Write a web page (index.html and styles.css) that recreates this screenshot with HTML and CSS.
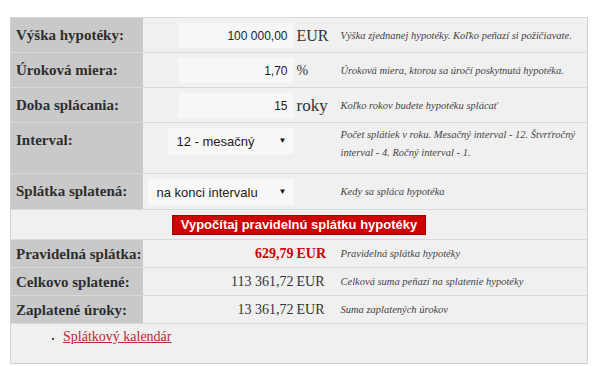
FILE: index.html
```html
<!DOCTYPE html>
<html lang="sk">
<head>
    <meta charset="UTF-8">
    <meta name="viewport" content="width=device-width, initial-scale=1.0">
    <title>Hypotekárna kalkulačka</title>
    <link rel="stylesheet" href="styles.css">
</head>
<body>
    <div class="calc">
        <table class="calc-table">
            <colgroup>
                <col class="col-label">
                <col class="col-field">
                <col class="col-unit">
                <col class="col-desc">
            </colgroup>
            <tr class="row-input">
                <th>Výška hypotéky:</th>
                <td class="field"><input type="text" class="num" value="100 000,00" style="width:116px"></td>
                <td class="unit">EUR</td>
                <td class="desc">Výška zjednanej hypotéky. Koľko peňazí si požičiavate.</td>
            </tr>
            <tr class="row-input">
                <th>Úroková miera:</th>
                <td class="field"><input type="text" class="num" value="1,70" style="width:116px"></td>
                <td class="unit unit-small">%</td>
                <td class="desc">Úroková miera, ktorou sa úročí poskytnutá hypotéka.</td>
            </tr>
            <tr class="row-input">
                <th>Doba splácania:</th>
                <td class="field"><input type="text" class="num" value="15" style="width:116px"></td>
                <td class="unit unit-big">roky</td>
                <td class="desc">Koľko rokov budete hypotéku splácať</td>
            </tr>
            <tr class="row-input row-tall">
                <th>Interval:</th>
                <td class="field">
                    <span class="select-wrap">
                        <select style="width:126px">
                            <option>12 - mesačný</option>
                            <option>4 - štvrťročný</option>
                            <option>1 - ročný</option>
                        </select>
                    </span>
                </td>
                <td class="unit"></td>
                <td class="desc">Počet splátiek v roku. Mesačný interval - 12. Štvrťročný interval - 4. Ročný interval - 1.</td>
            </tr>
            <tr class="row-input">
                <th>Splátka splatená:</th>
                <td class="field">
                    <span class="select-wrap">
                        <select style="width:146px">
                            <option>na konci intervalu</option>
                            <option>na začiatku intervalu</option>
                        </select>
                    </span>
                </td>
                <td class="unit"></td>
                <td class="desc">Kedy sa spláca hypotéka</td>
            </tr>
            <tr class="row-button">
                <td colspan="4"><button type="button">Vypočítaj pravidelnú splátku hypotéky</button></td>
            </tr>
            <tr class="row-result row-main">
                <th>Pravidelná splátka:</th>
                <td class="value">629,79</td>
                <td class="unit">EUR</td>
                <td class="desc">Pravidelná splátka hypotéky</td>
            </tr>
            <tr class="row-result">
                <th>Celkovo splatené:</th>
                <td class="value">113 361,72</td>
                <td class="unit">EUR</td>
                <td class="desc">Celková suma peňazí na splatenie hypotéky</td>
            </tr>
            <tr class="row-result">
                <th>Zaplatené úroky:</th>
                <td class="value">13 361,72</td>
                <td class="unit">EUR</td>
                <td class="desc">Suma zaplatených úrokov</td>
            </tr>
            <tr class="row-links">
                <td colspan="4">
                    <ul>
                        <li><a href="#kalendar">Splátkový kalendár</a></li>
                    </ul>
                </td>
            </tr>
        </table>
    </div>
</body>
</html>
```

FILE: styles.css
```css
* {
    margin: 0;
    padding: 0;
    box-sizing: border-box;
}

body {
    background: #fff;
    font-family: "Liberation Serif", serif;
    color: #333;
}

.calc {
    padding: 17px 10px;
}

.calc-table {
    width: 578px;
    table-layout: fixed;
    border-collapse: collapse;
    border: 1px solid #d2d2d2;
    background: #f0f0f0;
}

.col-label { width: 132px; }
.col-field { width: 152px; }
.col-unit { width: 44px; }

.calc-table th,
.calc-table td {
    border-top: 1px solid #d9d9d9;
    vertical-align: top;
}

.calc-table th {
    background: #c9c9c9;
    text-align: left;
    font-size: 15px;
    font-weight: bold;
    line-height: 18px;
    padding: 8px 2px 8px 5px;
    color: #2e2e2e;
    white-space: nowrap;
    overflow: hidden;
}

/* input rows */
.row-input td {
    padding: 5px 0 4px;
}

.row-input .field {
    text-align: right;
    padding-right: 1px;
}

input.num {
    height: 25px;
    border: none;
    background: #f7f7f7;
    font-family: "Liberation Sans", Arial, sans-serif;
    font-size: 12px;
    color: #222;
    text-align: right;
    padding: 0 6px;
}

.select-wrap {
    position: relative;
    display: inline-block;
}

.select-wrap select {
    appearance: none;
    -webkit-appearance: none;
    height: 26px;
    border: none;
    border-radius: 0;
    background: #f8f8f8;
    font-family: "Liberation Sans", Arial, sans-serif;
    font-size: 13px;
    color: #222;
    padding: 0 16px 0 9px;
    display: block;
}

.select-wrap::after {
    content: "\25BC";
    position: absolute;
    right: 7px;
    top: 8px;
    font-size: 8px;
    color: #111;
    pointer-events: none;
}

.unit {
    font-size: 16px;
    line-height: 25px;
    padding-left: 2px !important;
    white-space: nowrap;
    color: #333;
}

.unit-small {
    font-size: 14px;
}

.unit-big {
    font-size: 17px;
}

.desc {
    font-style: italic;
    font-size: 10.5px;
    line-height: 25px;
    color: #444;
    padding: 5px 2px 4px 2px !important;
}

.row-tall th {
    height: 51px;
}

.row-tall .desc {
    line-height: 18px;
    padding-top: 3px !important;
}

/* button row */
.row-button td {
    text-align: center;
    padding: 5px 0 4px;
}

button {
    background: #cc0000;
    color: #fff;
    border: 1px solid #a30000;
    font-family: "Liberation Sans", Arial, sans-serif;
    font-size: 13px;
    font-weight: bold;
    line-height: 18px;
    height: 20px;
    padding: 0 8px;
    cursor: pointer;
}

/* result rows */
.row-result th {
    padding: 5px 2px 4px 5px;
}

.row-result td {
    padding: 5px 0 4px;
    line-height: 18px;
}

.row-result .value {
    text-align: right;
    font-size: 14px;
    padding-right: 1px;
}

.row-result .unit {
    font-size: 14px;
    line-height: 18px;
}

.row-result .desc {
    line-height: 18px;
}

.row-main .value,
.row-main .unit {
    color: #cc0000;
    font-weight: bold;
}

/* links */
.row-links td {
    height: 40px;
    padding: 4px 0 0 52px;
}

.row-links ul {
    list-style: square;
    font-size: 14px;
    line-height: 18px;
}

.row-links li::marker {
    font-size: 8px;
    color: #444;
}

.row-links a {
    color: #c0282d;
    text-decoration: underline;
}
```
